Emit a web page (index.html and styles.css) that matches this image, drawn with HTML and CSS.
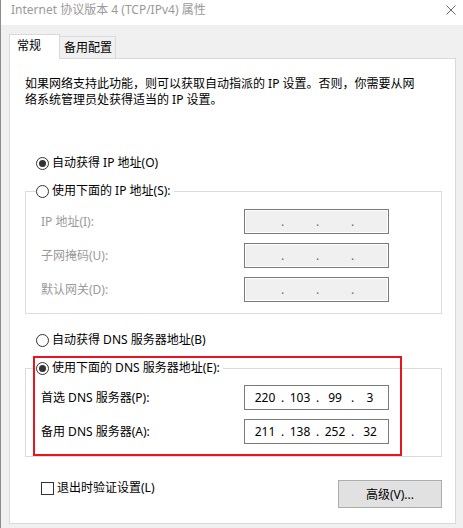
FILE: index.html
```html
<!DOCTYPE html>
<html lang="zh-CN">
<head>
    <meta charset="UTF-8">
    <title>Internet 协议版本 4 (TCP/IPv4) 属性</title>
    <link rel="stylesheet" href="styles.css">
</head>
<body>

<div class="window">
    <div class="titlebar">
        <span class="title">Internet 协议版本 4 (TCP/IPv4) 属性</span>
        <svg class="close" width="10" height="10" viewBox="0 0 10 10">
            <path d="M0.5 0.5 L9.5 9.5 M9.5 0.5 L0.5 9.5" stroke="#6a6a6a" stroke-width="1" fill="none"/>
        </svg>
    </div>

    <div class="content">
        <div class="tabs">
            <div class="tab active">常规</div>
            <div class="tab">备用配置</div>
        </div>

        <div class="panel">
            <p class="intro">如果网络支持此功能，则可以获取自动指派的 IP 设置。否则，你需要从网<br>络系统管理员处获得适当的 IP 设置。</p>

            <div class="option first"><span class="radio checked"></span>自动获得 IP 地址(O)</div>
            <fieldset class="group">
                <legend class="option"><span class="radio"></span>使用下面的 IP 地址(S):</legend>
                <div class="field disabled">
                    <span class="label">IP 地址(I):</span>
                    <div class="ip"><span></span><i>.</i><span></span><i>.</i><span></span><i>.</i><span></span></div>
                </div>
                <div class="field disabled">
                    <span class="label">子网掩码(U):</span>
                    <div class="ip"><span></span><i>.</i><span></span><i>.</i><span></span><i>.</i><span></span></div>
                </div>
                <div class="field disabled">
                    <span class="label">默认网关(D):</span>
                    <div class="ip"><span></span><i>.</i><span></span><i>.</i><span></span><i>.</i><span></span></div>
                </div>
            </fieldset>

            <div class="option"><span class="radio"></span>自动获得 DNS 服务器地址(B)</div>
            <fieldset class="group dns">
                <legend class="option"><span class="radio checked"></span>使用下面的 DNS 服务器地址(E):</legend>
                <div class="field">
                    <span class="label">首选 DNS 服务器(P):</span>
                    <div class="ip"><span>220</span><i>.</i><span>103</span><i>.</i><span>99</span><i>.</i><span>3</span></div>
                </div>
                <div class="field">
                    <span class="label">备用 DNS 服务器(A):</span>
                    <div class="ip"><span>211</span><i>.</i><span>138</span><i>.</i><span>252</span><i>.</i><span>32</span></div>
                </div>
            </fieldset>

            <div class="footer">
                <div class="check"><span class="box"></span>退出时验证设置(L)</div>
                <button class="advanced">高级(V)...</button>
            </div>

            <div class="highlight"></div>
        </div>
    </div>
</div>

</body>
</html>
```

FILE: styles.css
```css
body {
    margin: 0;
    background-color: #f0f0f0;
    font-family: "Noto Sans", "Noto Sans CJK SC", "Microsoft YaHei", sans-serif;
    font-size: 12px;
    line-height: 16px;
    color: #000;
}
.window {
    width: 462px;
    height: 528px;
    border-left: 1px solid #8c8c8c;
    background-color: #f0f0f0;
    overflow: hidden;
}
.titlebar {
    display: flex;
    justify-content: space-between;
    align-items: flex-start;
    height: 25px;
    box-sizing: border-box;
    padding: 2px 7px 0 10px;
    background-color: #fff;
}
.title {
    color: #999;
}
.close {
    margin-top: 3px;
}
.content {
    padding: 9px 0 0 8px;
}
.tabs {
    display: flex;
    align-items: flex-end;
}
.tab {
    box-sizing: border-box;
    height: 22px;
    width: 56px;
    padding: 3px 0 0 4px;
    border: 1px solid #d9d9d9;
    border-bottom: none;
    border-left: none;
    background-color: #f0f0f0;
}
.tab.active {
    position: relative;
    z-index: 1;
    height: 25px;
    width: 51px;
    padding-left: 7px;
    margin-bottom: -1px;
    border-left: 1px solid #d9d9d9;
    background-color: #fff;
}
.panel {
    position: relative;
    box-sizing: border-box;
    width: 447px;
    padding: 17px 0 15px 15px;
    border: 1px solid #d9d9d9;
    background-color: #fff;
}
.intro {
    margin: 0;
    white-space: nowrap;
}
.option {
    display: flex;
    align-items: center;
    margin: 18px 0 0 11px;
}
.option.first {
    margin-top: 47px;
}
.radio {
    box-sizing: border-box;
    width: 13px;
    height: 13px;
    margin-right: 3px;
    border: 1px solid #333;
    border-radius: 50%;
    display: flex;
    align-items: center;
    justify-content: center;
}
.radio.checked::after {
    content: "";
    width: 7px;
    height: 7px;
    border-radius: 50%;
    background-color: #333;
}
.group {
    box-sizing: border-box;
    width: 417px;
    margin: 12px 0 0 0;
    padding: 10px 52px 11px 10px;
    border: 1px solid #dcdcdc;
    display: flex;
    flex-direction: column;
    gap: 9px;
}
.group.dns {
    padding-top: 9px;
    padding-bottom: 12px;
}
.group legend {
    margin: 0;
    padding: 0 3px 0 0;
}
.field {
    display: flex;
    justify-content: space-between;
    align-items: center;
    padding-left: 5px;
}
.field.disabled .label {
    color: #9a9a9a;
}
.ip {
    box-sizing: border-box;
    display: flex;
    align-items: center;
    width: 145px;
    height: 25px;
    padding-left: 6px;
    border: 1px solid #7a7a7a;
    background-color: #fff;
}
.ip span {
    width: 28px;
    text-align: center;
}
.ip i {
    width: 7px;
    font-style: normal;
    text-align: center;
}
.field.disabled .ip {
    background-color: #f0f0f0;
    box-shadow: inset 0 0 0 1px #fff;
    color: #6d6d6d;
}
.footer {
    display: flex;
    justify-content: space-between;
    align-items: flex-start;
    width: 417px;
    margin-top: 23px;
}
.check {
    display: flex;
    align-items: center;
    margin-left: 16px;
}
.box {
    box-sizing: border-box;
    width: 13px;
    height: 13px;
    margin-right: 3px;
    border: 1px solid #333;
    background-color: #fff;
}
.advanced {
    box-sizing: border-box;
    width: 104px;
    height: 28px;
    padding: 0;
    border: 1px solid #adadad;
    background-color: #e1e1e1;
    font-family: inherit;
    font-size: 12px;
    color: #000;
}
.highlight {
    position: absolute;
    left: 23px;
    top: 297px;
    width: 369px;
    height: 100px;
    box-sizing: border-box;
    border: 2px solid #e8141e;
}
```
